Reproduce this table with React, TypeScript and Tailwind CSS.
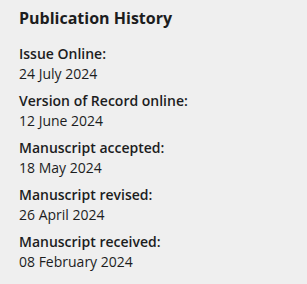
export default function App() {
  const items = [
    ["Issue Online:", "24 July 2024"],
    ["Version of Record online:", "12 June 2024"],
    ["Manuscript accepted:", "18 May 2024"],
    ["Manuscript revised:", "26 April 2024"],
    ["Manuscript received:", "08 February 2024"],
  ];
  return (
    <div
      className="w-[307px] h-[284px] bg-[#efefef] text-[#1c1d1e] pl-[19px] pt-[6px]"
      style={{ fontFamily: '"Open Sans", sans-serif' }}
    >
      <h2 className="text-[16px] leading-[24px] font-bold mb-[14px]">Publication History</h2>
      <div className="flex flex-col gap-[7px]">
        {items.map(([label, date]) => (
          <div key={label} className="text-[14px] leading-[20px]">
            <div className="font-semibold">{label}</div>
            <div>{date}</div>
          </div>
        ))}
      </div>
    </div>
  );
}
